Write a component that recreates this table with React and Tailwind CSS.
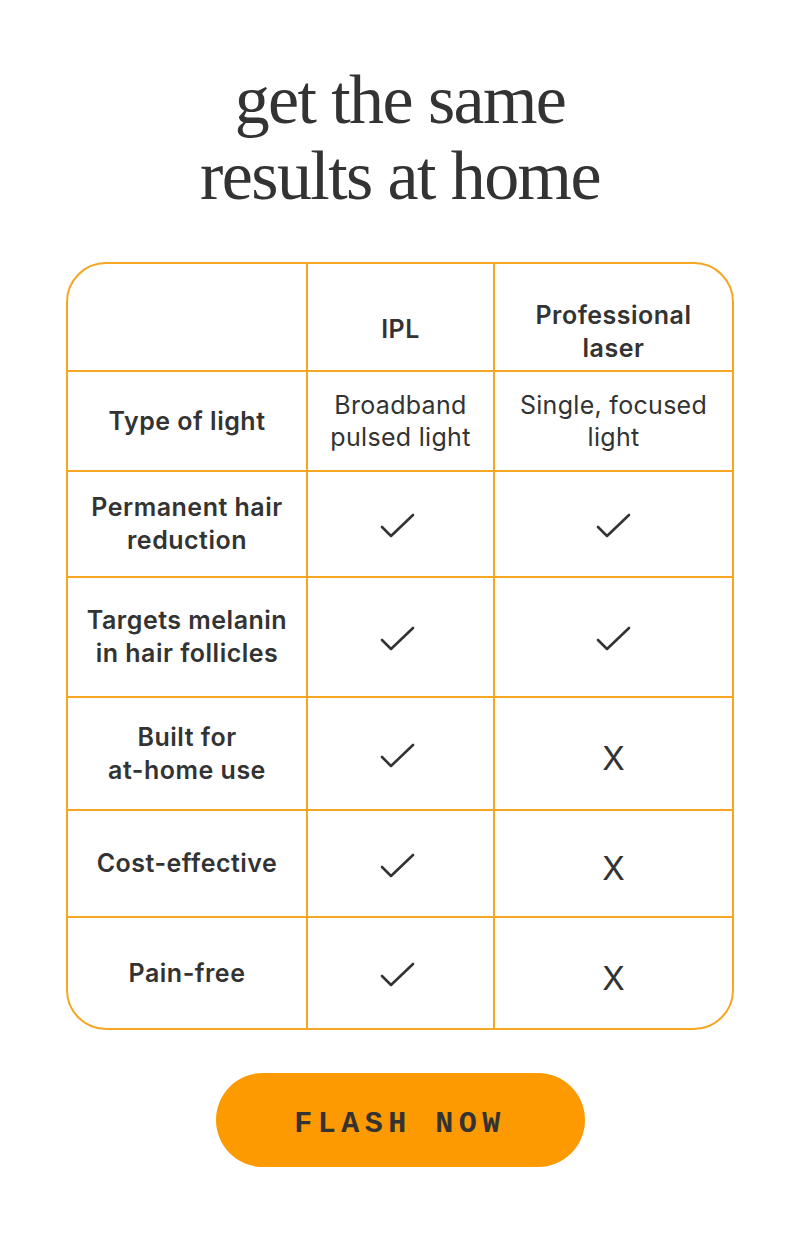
import React from 'react';

const rows = [
  { label: ['Type of light'], ipl: ['Broadband', 'pulsed light'], laser: ['Single, focused', 'light'], h: 'h-[100px]' },
  { label: ['Permanent hair', 'reduction'], ipl: true, laser: true, h: 'h-[106px]' },
  { label: ['Targets melanin', 'in hair follicles'], ipl: true, laser: true, h: 'h-[120px]' },
  { label: ['Built for', 'at-home use'], ipl: true, laser: false, h: 'h-[113px]' },
  { label: ['Cost-effective'], ipl: true, laser: false, h: 'h-[107px]' },
  { label: ['Pain-free'], ipl: true, laser: false, h: 'h-[110px]' },
];

function Check({ className }) {
  return (
    <svg width="36" height="28" viewBox="0 0 36 28" fill="none" className={className}>
      <path d="M2 15 L11 24 L33 3" stroke="#333333" strokeWidth="2.6" strokeLinecap="round" strokeLinejoin="round" />
    </svg>
  );
}

function Value({ v, checkClass }) {
  if (v === true) return <Check className={checkClass} />;
  if (v === false) return <span className="text-[33px] leading-none text-[#333] pt-[10px]">X</span>;
  return (
    <p className="text-[25px] leading-[32px] tracking-[0.3px] text-[#333] text-center">
      {v.map((l, i) => <span key={i} className="block">{l}</span>)}
    </p>
  );
}

export default function App() {
  return (
    <div className="w-[800px] min-h-[1233px] bg-white pt-[62px] font-['Inter',sans-serif]">
      <h1 className="text-center font-['Liberation_Serif',serif] text-[70px] leading-[76px] tracking-[-1.6px] text-[#333]">
        get the same<br />results at home
      </h1>

      {/* Comparison table */}
      <div className="mx-[66px] mt-[48px] w-[668px] rounded-[40px] border-2 border-[#f5a623] overflow-hidden">
        <div className="grid grid-cols-[240px_187px_1fr] h-[108px] border-b-2 border-[#f5a623]">
          <div className="border-r-2 border-[#f5a623]" />
          <div className="border-r-2 border-[#f5a623] flex items-center justify-center pt-[26px]">
            <span className="text-[25px] tracking-[0.5px] font-semibold text-[#333]">IPL</span>
          </div>
          <div className="flex items-center justify-center pt-[30px]">
            <span className="text-[25px] leading-[33px] tracking-[0.5px] font-semibold text-[#333] text-center">Professional<br />laser</span>
          </div>
        </div>
        {rows.map((r, i) => (
          <div
            key={i}
            className={`grid grid-cols-[240px_187px_1fr] ${r.h} ${i < rows.length - 1 ? 'border-b-2 border-[#f5a623]' : ''}`}
          >
            <div className="border-r-2 border-[#f5a623] flex items-center justify-center px-2">
              <p className="text-[25px] leading-[33px] tracking-[0.5px] font-semibold text-[#333] text-center">
                {r.label.map((l, j) => <span key={j} className="block">{l}</span>)}
              </p>
            </div>
            <div className="border-r-2 border-[#f5a623] flex items-center justify-center">
              <Value v={r.ipl} checkClass="mr-[6px] mt-[4px]" />
            </div>
            <div className="flex items-center justify-center">
              <Value v={r.laser} checkClass="mt-[4px]" />
            </div>
          </div>
        ))}
      </div>

      <div className="flex justify-center mt-[43px]">
        <button className="w-[369px] h-[94px] rounded-full bg-[#fd9a02] pt-[8px] font-['Liberation_Mono',monospace] font-bold text-[30px] tracking-[5.5px] text-[#333]">
          FLASH NOW
        </button>
      </div>
    </div>
  );
}
